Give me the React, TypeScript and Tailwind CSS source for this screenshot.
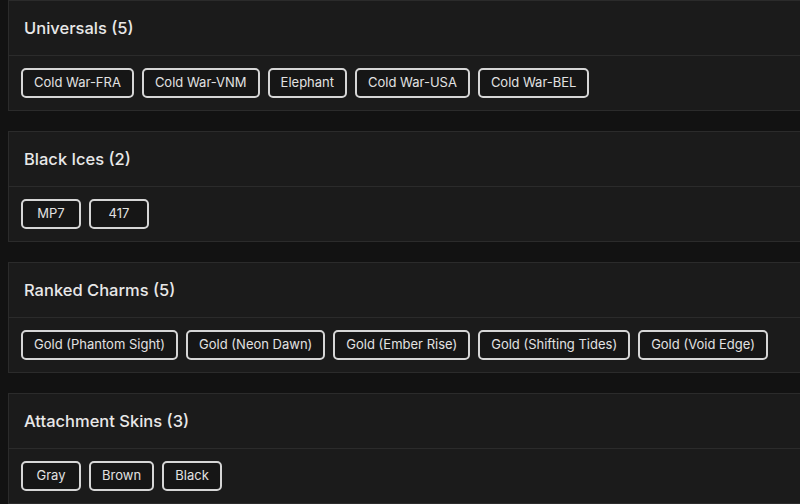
import React from 'react';

type Group = {
  title: string;
  items: string[];
};

const groups: Group[] = [
  {
    title: 'Universals',
    items: ['Cold War-FRA', 'Cold War-VNM', 'Elephant', 'Cold War-USA', 'Cold War-BEL'],
  },
  { title: 'Black Ices', items: ['MP7', '417'] },
  {
    title: 'Ranked Charms',
    items: [
      'Gold (Phantom Sight)',
      'Gold (Neon Dawn)',
      'Gold (Ember Rise)',
      'Gold (Shifting Tides)',
      'Gold (Void Edge)',
    ],
  },
  { title: 'Attachment Skins', items: ['Gray', 'Brown', 'Black'] },
];

const GroupCard = ({ group }: { group: Group }) => (
  <section className="border border-r-0 border-[#2b2b2b] bg-[#1b1b1b]">
    <header className="flex h-[55px] items-center border-b border-[#2b2b2b] px-[15px]">
      <h2 className="text-[16.5px] font-medium text-[#e8e8e8]">
        {group.title} ({group.items.length})
      </h2>
    </header>
    <div className="flex h-[54px] items-center gap-2 px-3">
      {group.items.map((item) => (
        <button
          key={item}
          className="h-[30px] min-w-[60px] rounded-[5px] border-2 border-[#d6d6d6] bg-[#161616] px-[11px] text-[13px] text-[#e2e2e2]"
        >
          {item}
        </button>
      ))}
    </div>
  </section>
);

export default function App() {
  return (
    <main
      className="flex min-h-[504px] flex-col gap-5 bg-[#121212] pl-2"
      style={{ fontFamily: 'Inter, "Noto Sans", sans-serif' }}
    >
      {groups.map((group) => (
        <GroupCard key={group.title} group={group} />
      ))}
    </main>
  );
}
